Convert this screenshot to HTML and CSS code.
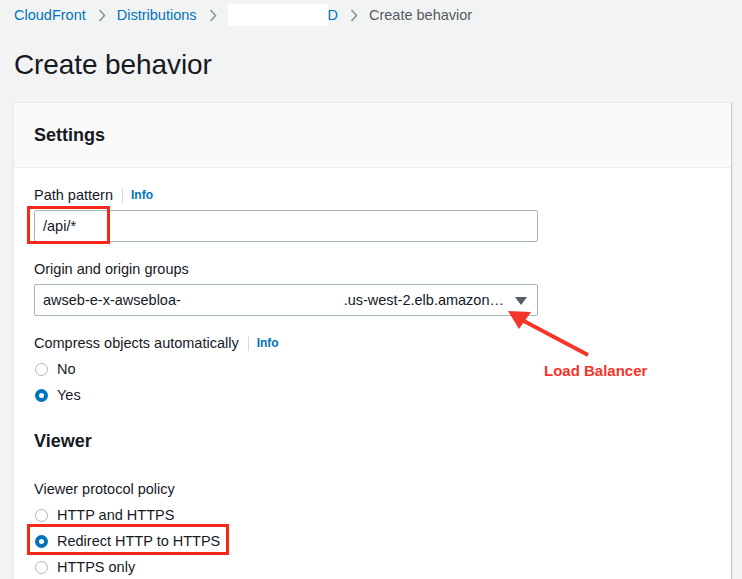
FILE: index.html
```html
<!DOCTYPE html>
<html lang="en">
<head>
<meta charset="utf-8">
<title>Create behavior</title>
<link rel="stylesheet" href="styles.css">
</head>
<body>
<nav class="crumbs">
  <a class="crumb-link">CloudFront</a>
  <svg class="chev" width="8" height="13" viewBox="0 0 8 13"><polyline points="1.5,1 6.5,6.5 1.5,12" fill="none" stroke="#879596" stroke-width="1.6"/></svg>
  <a class="crumb-link">Distributions</a>
  <svg class="chev" width="8" height="13" viewBox="0 0 8 13"><polyline points="1.5,1 6.5,6.5 1.5,12" fill="none" stroke="#879596" stroke-width="1.6"/></svg>
  <span class="redact"></span><a class="crumb-link">D</a>
  <svg class="chev" width="8" height="13" viewBox="0 0 8 13"><polyline points="1.5,1 6.5,6.5 1.5,12" fill="none" stroke="#879596" stroke-width="1.6"/></svg>
  <span class="crumb-current">Create behavior</span>
</nav>

<h1 class="page-title">Create behavior</h1>

<section class="panel">
  <header class="panel-head"><h2>Settings</h2></header>
  <div class="panel-body">
    <div class="label-row"><span>Path pattern</span><span class="sep"></span><a class="info">Info</a></div>
    <div class="input">/api/*</div>

    <div class="label-row gap16"><span>Origin and origin groups</span></div>
    <div class="input select">
      <span class="sel-text"><span>awseb-e-x-awsebloa-</span><span>.us-west-2.elb.amazon…</span></span>
      <svg class="caret" width="12" height="8" viewBox="0 0 12 8"><polygon points="0,0 12,0 6,8" fill="#545b64"/></svg>
    </div>

    <div class="label-row gap16"><span>Compress objects automatically</span><span class="sep"></span><a class="info">Info</a></div>
    <div class="radio first"><span class="dot"></span><span>No</span></div>
    <div class="radio"><span class="dot on"></span><span>Yes</span></div>

    <h2 class="sub-head">Viewer</h2>

    <div class="label-row"><span>Viewer protocol policy</span></div>
    <div class="radio first"><span class="dot"></span><span>HTTP and HTTPS</span></div>
    <div class="radio"><span class="dot on"></span><span>Redirect HTTP to HTTPS</span></div>
    <div class="radio"><span class="dot"></span><span>HTTPS only</span></div>
  </div>
</section>

<svg class="marks" width="742" height="579" viewBox="0 0 742 579">
  <rect x="28.5" y="207.5" width="80" height="35" fill="none" stroke="#f5281a" stroke-width="3"/>
  <rect x="28.5" y="525.5" width="199" height="28" fill="none" stroke="#f5281a" stroke-width="3"/>
  <line x1="588" y1="355" x2="522" y2="320" stroke="#f5352a" stroke-width="4"/>
  <polygon points="508,311 531,312 519,329" fill="#f5352a"/>
</svg>
<div class="mark-label">Load Balancer</div>
</body>
</html>
```

FILE: styles.css
```css
* { box-sizing: border-box; }
html, body { margin: 0; padding: 0; }
body {
  background: #f2f3f3;
  font-family: "Liberation Sans", Arial, sans-serif;
  color: #16191f;
  font-size: 14.5px;
  width: 742px;
  height: 579px;
  overflow: hidden;
  position: relative;
}
.crumbs {
  display: flex;
  align-items: center;
  height: 30px;
  padding-left: 14px;
  font-size: 14.5px;
}
.crumb-link { color: #0073bb; }
.crumb-current { color: #545b64; }
.chev { margin: 1px 11px 0 12px; }
.redact {
  display: inline-block;
  width: 100px;
  height: 22px;
  background: #ffffff;
  margin-right: 0;
}
.page-title {
  margin: 17px 0 0 14px;
  font-size: 28px;
  font-weight: normal;
  line-height: 36px;
  letter-spacing: -0.1px;
  color: #16191f;
}
.panel {
  margin: 19px 0 0 13px;
  width: 719px;
  background: #ffffff;
  border: 1px solid #eaeded;
  border-right: 1px solid #c8cccc;
  box-shadow: 0 1px 1px rgba(0,28,36,0.2);
}
.panel-head {
  height: 65px;
  background: #fafafa;
  border-bottom: 1px solid #eaeded;
  display: flex;
  align-items: center;
  padding-left: 20px;
}
.panel-head h2, .sub-head {
  margin: 0;
  font-size: 18px;
  font-weight: bold;
  color: #16191f;
}
.panel-body {
  padding: 16px 20px 20px 20px;
}
.label-row {
  display: flex;
  align-items: center;
  height: 22px;
  color: #16191f;
}
.label-row.gap16 { margin-top: 16px; }
.sep {
  width: 1px;
  height: 15px;
  background: #d5dbdb;
  margin: 0 8px 0 9px;
}
.info {
  color: #0073bb;
  font-weight: bold;
  font-size: 12px;
}
.input {
  margin-top: 4px;
  width: 504px;
  height: 32px;
  border: 1px solid #aab7b8;
  border-radius: 2px;
  padding: 0 8px;
  display: flex;
  align-items: center;
  color: #16191f;
}
.select { justify-content: space-between; padding-right: 10px; }
.sel-text {
  display: flex;
  justify-content: space-between;
  width: 461px;
}
.caret { margin-top: 1px; }
.radio {
  display: flex;
  align-items: center;
  height: 22px;
  margin-top: 4px;
}
.radio.first { margin-top: 4px; }
.dot {
  width: 13px;
  height: 13px;
  border-radius: 50%;
  border: 1.5px solid #aab7b8;
  margin-left: 1px;
  margin-right: 9px;
  background: #fff;
}
.dot.on {
  border: 4px solid #0073bb;
  background: #fff;
}
.sub-head {
  margin-top: 22px;
  line-height: 26px;
  margin-bottom: 24px;
}
.marks {
  position: absolute;
  left: 0;
  top: 0;
  pointer-events: none;
}
.mark-label {
  position: absolute;
  left: 544px;
  top: 362px;
  color: #f5352a;
  font-weight: bold;
  font-size: 15px;
  line-height: 18px;
}
```
